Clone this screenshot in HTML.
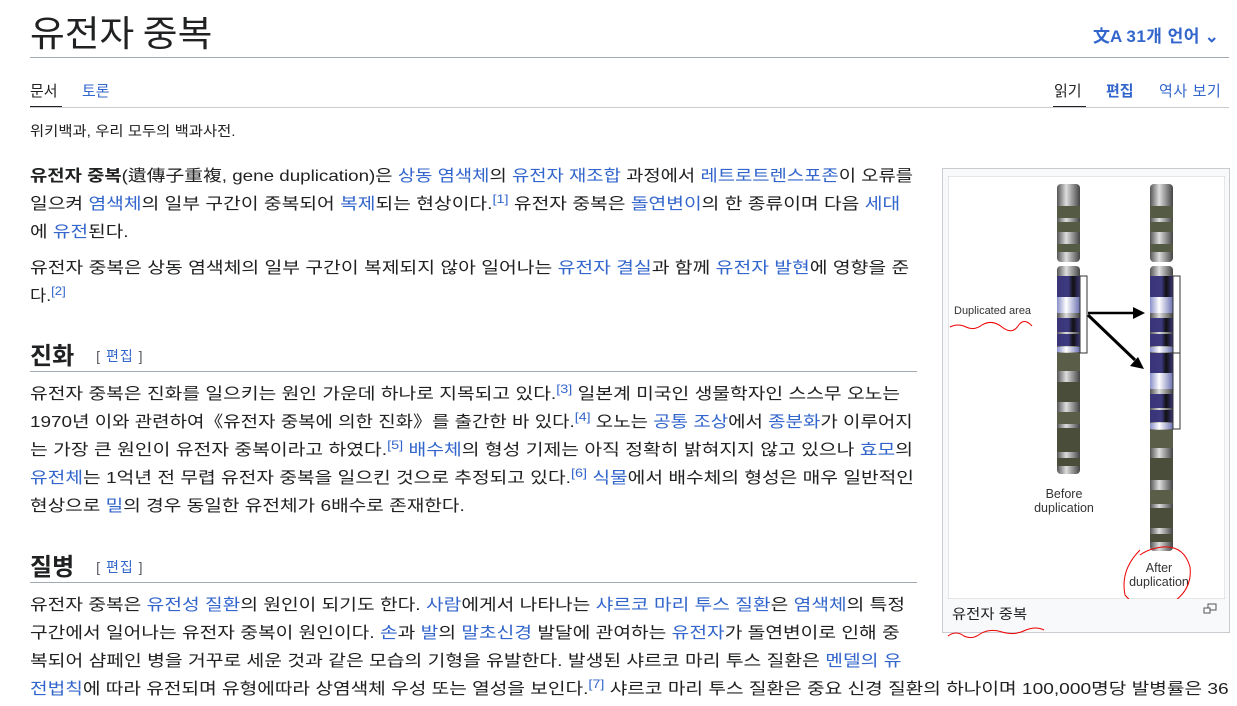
<!DOCTYPE html>
<html><head><meta charset="utf-8">
<style>
*{margin:0;padding:0;box-sizing:border-box}
body{width:1237px;height:706px;overflow:hidden;background:#fff;font-family:"Liberation Sans","Noto Sans CJK KR",sans-serif;color:#202122;position:relative}
a{color:#3366cc;text-decoration:none}
.abs{position:absolute;white-space:nowrap}
h1{position:absolute;left:30px;top:6px;font-family:"Noto Sans CJK KR",sans-serif;font-weight:400;font-size:36px;line-height:50px;transform:scaleX(1.05);transform-origin:left}
.l{position:absolute;left:30px;font-size:16px;white-space:nowrap;line-height:20px;transform-origin:left center}
sup{font-size:12px;vertical-align:6px;line-height:0}
h2{position:absolute;left:30px;font-size:24px;font-weight:700;font-family:"Liberation Sans","Noto Sans CJK KR",sans-serif;line-height:30px}
h2 span{font-size:14px;font-weight:400;color:#54595d;margin-left:22px;vertical-align:3px;letter-spacing:1px}
.hr{position:absolute;left:30px;height:1px;background:#a2a9b1}
</style></head><body>
<h1>유전자 중복</h1>
<div class="abs" style="left:1093px;top:22px;font-size:17px;font-weight:700;color:#3366cc">文A <span style="letter-spacing:0.5px">31개 언어</span> ⌄</div>
<div class="hr" style="top:57px;width:1199px"></div>
<div class="abs" style="left:30px;top:80px;font-size:15px">문서</div>
<div class="abs" style="left:82px;top:80px;font-size:15px;color:#3366cc">토론</div>
<div style="position:absolute;left:30px;top:106px;width:32px;height:2px;background:#202122"></div>
<div class="abs" style="left:1054px;top:80px;font-size:15px">읽기</div>
<div style="position:absolute;left:1053px;top:106px;width:33px;height:2px;background:#202122"></div>
<div class="abs" style="left:1106px;top:80px;font-size:15px;color:#3366cc;font-weight:700">편집</div>
<div class="abs" style="left:1159px;top:80px;font-size:15px;color:#3366cc;letter-spacing:0.6px">역사 보기</div>
<div class="hr" style="top:107px;width:1199px;background:#c8ccd1"></div>
<div class="abs" style="left:30px;top:121px;font-size:14px;transform:scaleX(1.1);transform-origin:left">위키백과, 우리 모두의 백과사전.</div>

<div class="l" style="top:167px;transform:scaleX(1.174)"><b>유전자 중복</b>(遺傳子重複, gene duplication)은 <a>상동 염색체</a>의 <a>유전자 재조합</a> 과정에서 <a>레트로트렌스포존</a>이 오류를</div>
<div class="l" style="top:195px;transform:scaleX(1.203)">일으켜 <a>염색체</a>의 일부 구간이 중복되어 <a>복제</a>되는 현상이다.<sup><a>[1]</a></sup> 유전자 중복은 <a>돌연변이</a>의 한 종류이며 다음 <a>세대</a></div>
<div class="l" style="top:223px;transform:scaleX(1.195)">에 <a>유전</a>된다.</div>
<div class="l" style="top:259px;transform:scaleX(1.206)">유전자 중복은 상동 염색체의 일부 구간이 복제되지 않아 일어나는 <a>유전자 결실</a>과 함께 <a>유전자 발현</a>에 영향을 준</div>
<div class="l" style="top:287px;transform:scaleX(1.1)">다.<sup><a>[2]</a></sup></div>

<h2 style="top:341px">진화<span>[ <a>편집</a> ]</span></h2>
<div class="hr" style="top:371px;width:887px"></div>
<div class="l" style="top:385px;transform:scaleX(1.203)">유전자 중복은 진화를 일으키는 원인 가운데 하나로 지목되고 있다.<sup><a>[3]</a></sup> 일본계 미국인 생물학자인 스스무 오노는</div>
<div class="l" style="top:413px;transform:scaleX(1.182)">1970년 이와 관련하여《유전자 중복에 의한 진화》를 출간한 바 있다.<sup><a>[4]</a></sup> 오노는 <a>공통 조상</a>에서 <a>종분화</a>가 이루어지</div>
<div class="l" style="top:441px;transform:scaleX(1.206)">는 가장 큰 원인이 유전자 중복이라고 하였다.<sup><a>[5]</a></sup> <a>배수체</a>의 형성 기제는 아직 정확히 밝혀지지 않고 있으나 <a>효모</a>의</div>
<div class="l" style="top:469px;transform:scaleX(1.2)"><a>유전체</a>는 1억년 전 무렵 유전자 중복을 일으킨 것으로 추정되고 있다.<sup><a>[6]</a></sup> <a>식물</a>에서 배수체의 형성은 매우 일반적인</div>
<div class="l" style="top:497px;transform:scaleX(1.195)">현상으로 <a>밀</a>의 경우 동일한 유전체가 6배수로 존재한다.</div>

<h2 style="top:552px">질병<span>[ <a>편집</a> ]</span></h2>
<div class="hr" style="top:582px;width:887px"></div>
<div class="l" style="top:596px;transform:scaleX(1.2)">유전자 중복은 <a>유전성 질환</a>의 원인이 되기도 한다. <a>사람</a>에게서 나타나는 <a>샤르코 마리 투스 질환</a>은 <a>염색체</a>의 특정</div>
<div class="l" style="top:624px;transform:scaleX(1.2)">구간에서 일어나는 유전자 중복이 원인이다. <a>손</a>과 <a>발</a>의 <a>말초신경</a> 발달에 관여하는 <a>유전자</a>가 돌연변이로 인해 중</div>
<div class="l" style="top:652px;transform:scaleX(1.205)">복되어 샴페인 병을 거꾸로 세운 것과 같은 모습의 기형을 유발한다. 발생된 샤르코 마리 투스 질환은 <a>멘델의 유</a></div>
<div class="l" style="top:680px;transform:scaleX(1.196)"><a>전법칙</a>에 따라 유전되며 유형에따라 상염색체 우성 또는 열성을 보인다.<sup><a>[7]</a></sup> 샤르코 마리 투스 질환은 중요 신경 질환의 하나이며 100,000명당 발병률은 36</div>

<div style="position:absolute;left:942px;top:168px;width:288px;height:465px;border:1px solid #c8ccd1;background:#f8f9fa"></div>
<svg style="position:absolute;left:948px;top:176px" width="277" height="423" viewBox="948 176 277 423">
<rect x="948" y="176" width="277" height="423" fill="#fff" stroke="#c8ccd1"/>
<defs><linearGradient id="g" x1="0" x2="1"><stop offset="0" stop-color="#555"/><stop offset=".4" stop-color="#ddd"/><stop offset="1" stop-color="#444"/></linearGradient>
<linearGradient id="b" x1="0" x2="1"><stop offset="0" stop-color="#3a3478"/><stop offset=".5" stop-color="#3d3a80"/><stop offset=".7" stop-color="#111"/><stop offset="1" stop-color="#3a3478"/></linearGradient>
<linearGradient id="lb" x1="0" x2="1"><stop offset="0" stop-color="#8890c8"/><stop offset=".4" stop-color="#fff"/><stop offset="1" stop-color="#6a70b0"/></linearGradient></defs>
<g>
<rect x="1057" y="184" width="23" height="78" rx="4" fill="url(#g)"/>
<rect x="1057" y="206" width="23" height="12" fill="#555a45"/><rect x="1057" y="222" width="23" height="10" fill="#555a45"/><rect x="1057" y="244" width="23" height="8" fill="#555a45"/>
<rect x="1057" y="266" width="23" height="208" rx="4" fill="url(#g)"/>
<rect x="1057" y="276" width="23" height="21" fill="url(#b)"/><rect x="1057" y="297" width="23" height="16" fill="url(#lb)"/><rect x="1057" y="318" width="23" height="14" fill="url(#b)"/><rect x="1057" y="334" width="23" height="12" fill="url(#b)"/><rect x="1057" y="347" width="23" height="5" fill="url(#lb)"/>
<rect x="1057" y="353" width="23" height="18" fill="#5a5d48"/><rect x="1057" y="382" width="23" height="20" fill="#4a4d3a"/><rect x="1057" y="412" width="23" height="12" fill="#5a5d48"/><rect x="1057" y="428" width="23" height="24" fill="#4a4d3a"/><rect x="1057" y="458" width="23" height="8" fill="#4a4d3a"/>
<rect x="1080" y="276" width="7" height="77" fill="none" stroke="#333"/>
</g>
<g>
<rect x="1150" y="184" width="23" height="78" rx="4" fill="url(#g)"/>
<rect x="1150" y="206" width="23" height="12" fill="#555a45"/><rect x="1150" y="222" width="23" height="10" fill="#555a45"/><rect x="1150" y="244" width="23" height="8" fill="#555a45"/>
<rect x="1150" y="266" width="23" height="285" rx="4" fill="url(#g)"/>
<rect x="1150" y="276" width="23" height="21" fill="url(#b)"/><rect x="1150" y="297" width="23" height="16" fill="url(#lb)"/><rect x="1150" y="318" width="23" height="14" fill="url(#b)"/><rect x="1150" y="334" width="23" height="12" fill="url(#b)"/><rect x="1150" y="347" width="23" height="5" fill="url(#lb)"/>
<rect x="1150" y="353" width="23" height="20" fill="url(#b)"/><rect x="1150" y="373" width="23" height="16" fill="url(#lb)"/><rect x="1150" y="394" width="23" height="14" fill="url(#b)"/><rect x="1150" y="410" width="23" height="12" fill="url(#b)"/><rect x="1150" y="423" width="23" height="6" fill="url(#lb)"/>
<rect x="1150" y="430" width="23" height="18" fill="#5a5d48"/><rect x="1150" y="458" width="23" height="22" fill="#4a4d3a"/><rect x="1150" y="490" width="23" height="14" fill="#5a5d48"/><rect x="1150" y="508" width="23" height="20" fill="#4a4d3a"/><rect x="1150" y="534" width="23" height="8" fill="#4a4d3a"/>
<rect x="1173" y="276" width="7" height="153" fill="none" stroke="#333"/><line x1="1173" y1="353" x2="1180" y2="353" stroke="#333"/>
</g>
<path d="M1088 313 L1135 313" stroke="#000" stroke-width="2.5"/><path d="M1145 313 l-12 -6 v12z" fill="#000"/>
<path d="M1088 315 L1135 360" stroke="#000" stroke-width="3"/><path d="M1144 369 l-14 -3 l8 -9z" fill="#000"/>
<text x="954" y="314" font-size="11" fill="#333" font-family="Liberation Sans">Duplicated area</text>
<path d="M950 327 q8 -4 16 0 t16 -2 q10 -6 20 2 t16 -1 t14 0" fill="none" stroke="#e00" stroke-width="1"/>
<text x="1064" y="498" font-size="12.5" fill="#333" text-anchor="middle" font-family="Liberation Sans">Before</text>
<text x="1064" y="512" font-size="12.5" fill="#333" text-anchor="middle" font-family="Liberation Sans">duplication</text>
<text x="1159" y="572" font-size="12.5" fill="#333" text-anchor="middle" font-family="Liberation Sans">After</text>
<text x="1159" y="586" font-size="12.5" fill="#333" text-anchor="middle" font-family="Liberation Sans">duplication</text>
<path d="M1140 550 q-20 20 -15 45 q15 18 40 12 q28 -14 25 -40 q-6 -22 -28 -20 q-14 2 -22 8" fill="none" stroke="#e00" stroke-width="1"/>
</svg>
<div class="abs" style="left:952px;top:604px;font-size:14px;transform:scaleX(1.1);transform-origin:left">유전자 중복</div>
<svg style="position:absolute;left:946px;top:624px" width="110" height="16"><path d="M2 12 q8 -6 16 0 q8 4 16 -2 q10 -6 22 -2 q12 4 24 -2 q10 -4 18 0" fill="none" stroke="#e00"/></svg>
<svg style="position:absolute;left:1203px;top:603px" width="14" height="12"><rect x="5" y="1" width="8" height="6" fill="none" stroke="#555"/><rect x="1" y="5" width="6" height="5" fill="#fff" stroke="#555"/></svg>
</body></html>
